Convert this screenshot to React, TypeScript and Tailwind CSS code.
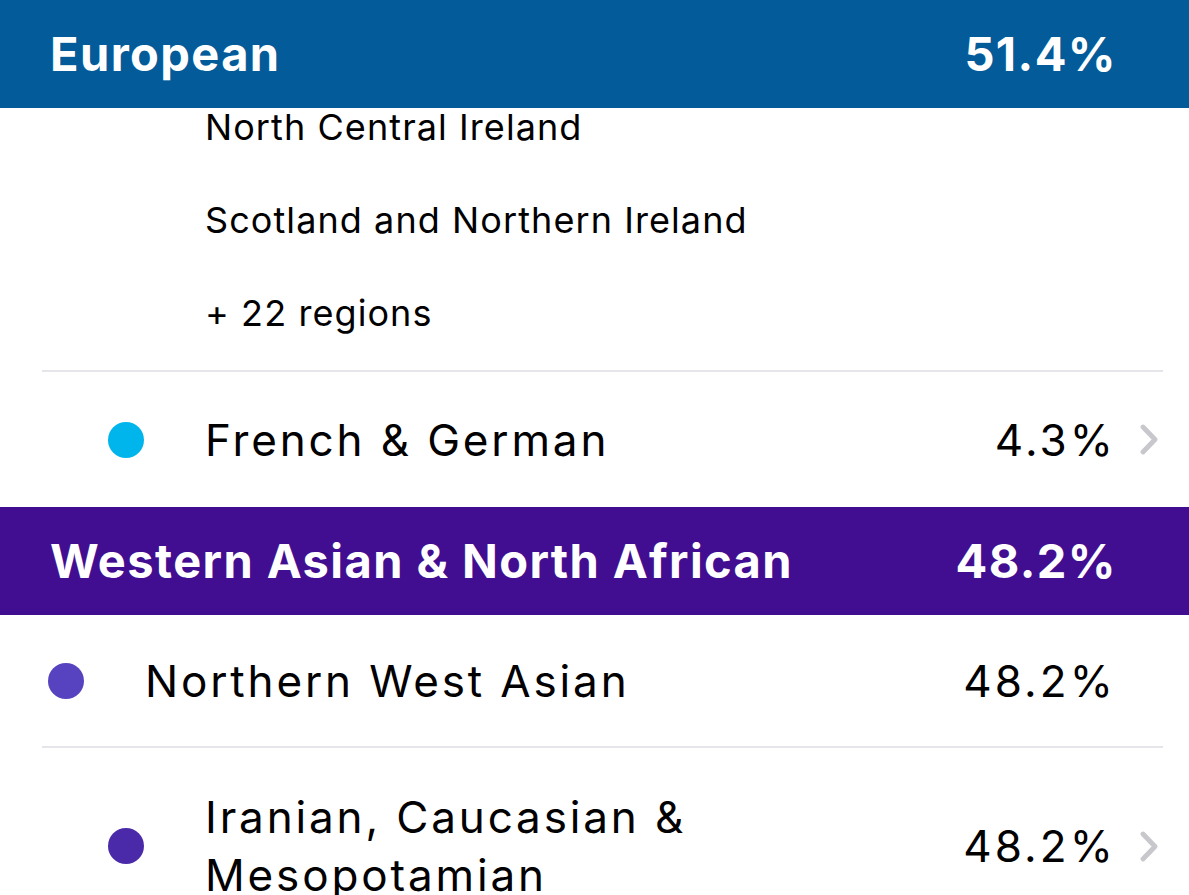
type Row = {
    name: string;
    pct: string;
    dot: string;
    nested?: boolean;
    chevron?: boolean;
};

function Chevron() {
    return (
        <svg width="18" height="31" viewBox="0 0 18 31" fill="none">
            <polyline points="3,3 15,15.5 3,28" stroke="#c7c7cc" strokeWidth="4.8" strokeLinecap="round" strokeLinejoin="round" />
        </svg>
    );
}

function Header({ title, pct, bg }: { title: string; pct: string; bg: string }) {
    return (
        <div className={`flex items-center justify-between h-[108px] pl-[50px] pr-[72px] text-white font-bold text-[47px] tracking-[0.03em] ${bg}`}>
            <span>{title}</span>
            <span>{pct}</span>
        </div>
    );
}

function Divider() {
    return <div className="h-[2px] ml-[42px] mr-[26px] bg-[#e5e5ea]" />;
}

function RegionRow({ row, height }: { row: Row; height: string }) {
    return (
        <div className={`flex items-center ${height} ${row.nested ? "pl-[108px]" : "pl-[48px]"}`}>
            <div className={`w-9 h-9 rounded-full shrink-0 ${row.dot}`} />
            <div className="flex-1 ml-[61px] mr-[40px] text-[44px] leading-[58px] tracking-[0.065em] text-black">{row.name}</div>
            <div className="text-[44px] tracking-[0.07em] text-black">{row.pct}</div>
            <div className="w-[73px] flex items-center pl-[24px]">
                {row.chevron && <Chevron />}
            </div>
        </div>
    );
}

export default function App() {
    const subRegions = ["North Central Ireland", "Scotland and Northern Ireland", "+ 22 regions"];

    return (
        <div className="w-[1189px] h-[895px] overflow-hidden bg-white" style={{ fontFamily: "Inter, 'Noto Sans', sans-serif" }}>
            <Header title="European" pct="51.4%" bg="bg-[#045b99]" />

            {/* cluster list, partly scrolled under the header */}
            <div className="flex flex-col gap-[49px] -mt-[3px] pl-[205px] pb-[35px] text-[36px] leading-[44px] tracking-[0.03em] text-black">
                {subRegions.map((r) => (
                    <div key={r}>{r}</div>
                ))}
            </div>
            <Divider />
            <RegionRow
                height="h-[135px]"
                row={{ name: "French & German", pct: "4.3%", dot: "bg-[#00b5ec]", nested: true, chevron: true }}
            />

            <Header title="Western Asian & North African" pct="48.2%" bg="bg-[#420e91]" />
            <RegionRow
                height="h-[131px]"
                row={{ name: "Northern West Asian", pct: "48.2%", dot: "bg-[#5742c0]" }}
            />
            <Divider />
            <RegionRow
                height="h-[196px]"
                row={{ name: "Iranian, Caucasian & Mesopotamian", pct: "48.2%", dot: "bg-[#4a2aa8]", nested: true, chevron: true }}
            />
        </div>
    );
}
